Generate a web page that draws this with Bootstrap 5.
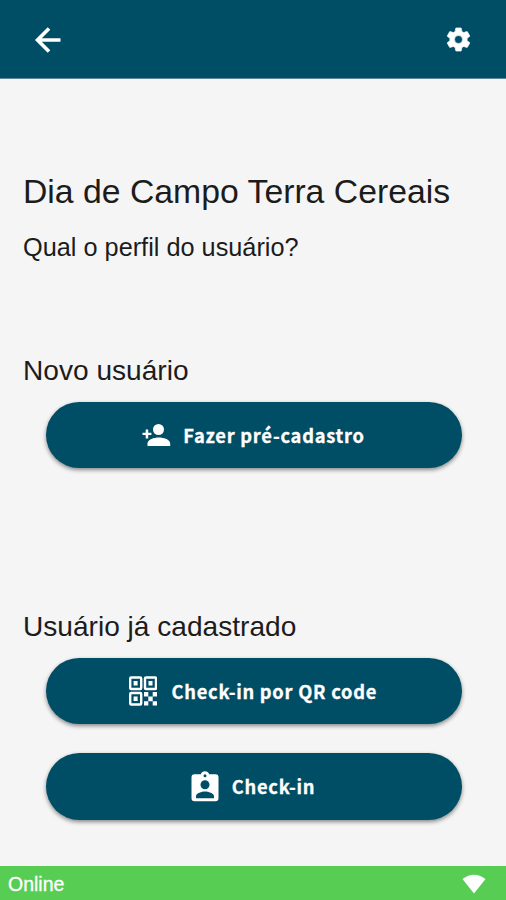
<!DOCTYPE html>
<html lang="pt-BR">
<head>
<meta charset="utf-8">
<meta name="viewport" content="width=device-width, initial-scale=1">
<title>Dia de Campo Terra Cereais</title>
<link href="https://cdn.jsdelivr.net/npm/bootstrap@5.3.0/dist/css/bootstrap.min.css" rel="stylesheet">
<style>
  body { height: 900px; background: #f5f5f5; color: #1c1c1c; font-family: "Liberation Sans", Arial, sans-serif; overflow: hidden; }
  svg { display: block; flex: none; }
  .app-bar { height: 79px; padding: 1px 34px 0; background: #004d66; border-bottom: 1px solid #5f8797; }
  .gear { margin-right: -1px; }
  .content { padding: 92px 23px 0; }
  .title { font-size: 33.75px; line-height: 40px; white-space: nowrap; }
  .subtitle { font-size: 25.3px; line-height: 32px; margin-top: 20px; }
  .section { font-size: 28.1px; line-height: 34px; }
  .first { margin-top: 91px; }
  .second { margin-top: 142px; }
  .pill { width: 416px; height: 66.5px; margin: 13.5px 0 0 22.5px; background: #004d66; color: #fff; border: 0; font: 700 18.3px/28px "Noto Sans CJK SC", "Noto Sans", sans-serif; letter-spacing: .75px; -webkit-text-stroke: .3px #fff; box-shadow: 0 2px 4px rgba(0,0,0,.45); }
  .pill:hover { background: #00455c; color: #fff; }
  .qr { gap: 14.5px; padding-right: 1px !important; }
  .pill.last { margin-top: 29px; gap: 9px; padding-right: 5px !important; }
  .status { height: 34.5px; padding: 2px 20px 0 8px; background: #58cd54; color: #fff; font-size: 19.5px; line-height: 32px; -webkit-text-stroke: .3px #fff; }
</style>
</head>
<body class="d-flex flex-column">
  <header class="app-bar d-flex align-items-center justify-content-between flex-shrink-0">
    <svg width="28" height="28" viewBox="0 0 28 28" fill="none" stroke="#fff" stroke-width="3.6"><path d="M26.5 14H4M15 2.5 3.5 14 15 25.5"/></svg>
    <svg class="gear" width="29" height="29" viewBox="0 0 24 24" fill="#fff" stroke="#fff" stroke-width=".5"><path d="M19.14 12.94c.04-.3.06-.61.06-.94 0-.32-.02-.64-.07-.94l2.03-1.58c.18-.14.23-.41.12-.61l-1.92-3.32c-.12-.22-.37-.29-.59-.22l-2.39.96c-.5-.38-1.03-.7-1.62-.94L14.4 2.81c-.04-.24-.24-.41-.48-.41h-3.84c-.24 0-.43.17-.47.41L9.25 5.35C8.66 5.59 8.12 5.92 7.63 6.29L5.24 5.33c-.22-.08-.47 0-.59.22L2.74 8.87c-.12.21-.08.47.12.61l2.03 1.58c-.05.3-.09.63-.09.94s.02.64.07.94l-2.03 1.58c-.18.14-.23.41-.12.61l1.92 3.32c.12.22.37.29.59.22l2.39-.96c.5.38 1.03.7 1.62.94l.36 2.54c.05.24.24.41.48.41h3.84c.24 0 .44-.17.47-.41l.36-2.54c.59-.24 1.13-.56 1.62-.94l2.39.96c.22.08.47 0 .59-.22l1.92-3.32c.12-.22.07-.47-.12-.61l-2.01-1.58zM12 15.3a3.3 3.3 0 1 1 0-6.6 3.3 3.3 0 0 1 0 6.6z"/></svg>
  </header>
  <main class="content flex-grow-1">
    <h1 class="title fw-normal mb-0">Dia de Campo Terra Cereais</h1>
    <p class="subtitle mb-0">Qual o perfil do usuário?</p>
    <h2 class="section first fw-normal mb-0">Novo usuário</h2>
    <button class="pill btn rounded-pill d-flex align-items-center justify-content-center p-0" type="button">
      <svg class="me-2" width="33" height="30" viewBox="0 0 33 30" fill="#fff"><circle cx="16.5" cy="9.5" r="5.5"/><path d="M5.5 26v-2.5C5.5 19.5 12 17.5 16.8 17.5S28.2 19.5 28.2 23.5V26z"/><path d="M3.7 9.5h2.5v3.2h3.2v2.4H6.2v3.4H3.7v-3.4H.5v-2.4h3.2z"/></svg>
      <span>Fazer pré-cadastro</span>
    </button>
    <h2 class="section second fw-normal mb-0">Usuário já cadastrado</h2>
    <button class="pill qr btn rounded-pill d-flex align-items-center justify-content-center p-0" type="button">
      <svg width="28" height="30" viewBox="0 0 28 30" fill="#fff"><g fill="none" stroke="#fff" stroke-width="2.4"><rect x="1.2" y="1.5" width="11" height="11.5" rx="1"/><rect x="16" y="1.5" width="11" height="11.5" rx="1"/><rect x="1.2" y="17" width="11" height="11.5" rx="1"/></g><path d="M4.6 5h4v4.5h-4zM19.5 5h4v4.5h-4zM4.6 20.5h4V25h-4zM15 16h4.3v4.6H15zM23.7 16H28v4.6h-4.3zM19.3 20.6h4.4v4.6h-4.4zM15 25.2h4.3v4.3H15zM23.7 25.2H28v4.3h-4.3z"/></svg>
      <span>Check-in por QR code</span>
    </button>
    <button class="pill last btn rounded-pill d-flex align-items-center justify-content-center p-0" type="button">
      <svg width="36" height="36" viewBox="0 -1.2 24 24" fill="#fff"><path d="M19 3h-4.180C14.4 1.84 13.3 1 12 1s-2.4.84-2.82 2H5a2 2 0 0 0-2 2v14a2 2 0 0 0 2 2h14a2 2 0 0 0 2-2V5a2 2 0 0 0-2-2zm-7 0a1 1 0 1 1 0 2 1 1 0 0 1 0-2zm0 4a3 3 0 1 1 0 6 3 3 0 0 1 0-6zm6 12H6v-1.4c0-2 4-3.1 6-3.1s6 1.1 6 3.1z"/></svg>
      <span>Check-in</span>
    </button>
  </main>
  <footer class="status d-flex align-items-center justify-content-between flex-shrink-0">
    <span>Online</span>
    <svg width="24" height="20" viewBox="0 0 24 20" fill="#fff"><path d="M.5 5Q12-3.5 23.5 5L12 19.5z"/></svg>
  </footer>
</body>
</html>
